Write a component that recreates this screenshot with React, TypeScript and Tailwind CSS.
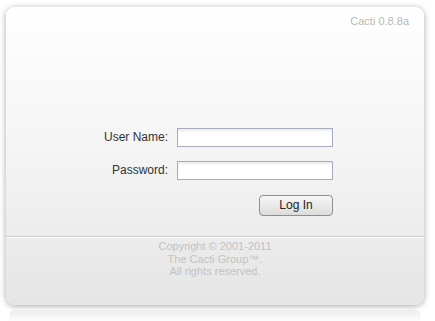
import React from "react";

export default function App() {
  return (
    <div
      className="w-[435px] h-[321px] bg-white overflow-hidden pt-[7px] pl-[6px]"
      style={{ fontFamily: '"Liberation Sans", Arial, sans-serif' }}
    >
      <div className="w-[418px] h-[298px] rounded-[9px] bg-gradient-to-b from-white via-[#f4f4f4] to-[#e5e5e5] shadow-[0_1px_6px_rgba(0,0,0,0.35)] flex flex-col">
        {/* header */}
        <div className="h-[229px] flex flex-col">
          <div className="flex justify-end pt-[6px] pr-[15px] text-[11px] text-[#b8b8b8]">
            Cacti 0.8.8a
          </div>
          <div className="mt-[98px] flex flex-col gap-[14px] pl-[91px]">
            <div className="flex items-center h-[19px]">
              <label className="w-[71px] text-right text-[12px] text-[#333]">User Name:</label>
              <input className="ml-[9px] w-[156px] h-[19px] border border-[#a8acc0] bg-white shadow-[inset_0_2px_2px_rgba(0,0,0,0.08)] outline-none" />
            </div>
            <div className="flex items-center h-[19px]">
              <label className="w-[71px] text-right text-[12px] text-[#333]">Password:</label>
              <input
                type="password"
                className="ml-[9px] w-[156px] h-[19px] border border-[#a8acc0] bg-white shadow-[inset_0_2px_2px_rgba(0,0,0,0.08)] outline-none"
              />
            </div>
            <div className="flex justify-end w-[236px] pt-[1px]">
              <button className="w-[74px] h-[21px] rounded-[4px] border border-[#8e8e8e] bg-gradient-to-b from-[#f7f7f7] to-[#dcdcdc] text-[12px] text-[#222]">
                Log In
              </button>
            </div>
          </div>
        </div>
        {/* footer */}
        <div className="border-t border-[#cfcfcf] shadow-[inset_0_1px_0_#f8f8f8] flex flex-col items-center pt-[3px] text-[11px] leading-[12.5px] text-[#c2c2c2]">
          <span>Copyright © 2001-2011</span>
          <span>The Cacti Group™.</span>
          <span>All rights reserved.</span>
        </div>
      </div>
      <div className="mt-[5px] ml-[3px] w-[412px] h-[12px] rounded-t-[6px] bg-gradient-to-b from-[#ececec] to-white" />
    </div>
  );
}
